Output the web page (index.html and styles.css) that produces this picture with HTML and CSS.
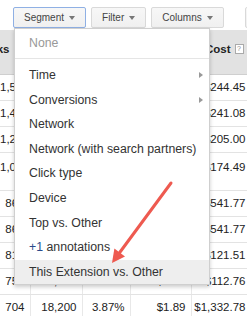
FILE: index.html
```html
<!DOCTYPE html>
<html lang="en">

<head>
    <meta charset="UTF-8">
    <meta name="viewport" content="width=device-width, initial-scale=1.0">
    <title>Segment menu</title>

    <link rel="stylesheet" href="styles.css">
</head>

<body>
    <div class="page">
        <div class="toolbar">
            <span class="rule"></span>
            <button class="btn open">Segment <i class="caret"></i></button>
            <button class="btn">Filter <i class="caret"></i></button>
            <button class="btn">Columns <i class="caret"></i></button>
            <span class="rule sep"></span>
            <button class="btn stub"></button>
        </div>

        <table class="stats">
            <thead>
                <tr>
                    <th class="c1"><div class="th">Clicks <span class="help">?</span></div></th>
                    <th class="c2"><div class="th">Impr. <span class="help">?</span></div></th>
                    <th class="c3"><div class="th">CTR <span class="help">?</span></div></th>
                    <th class="c4"><div class="th">Avg. CPC <span class="help">?</span></div></th>
                    <th class="c5"><div class="th">Cost <span class="help">?</span></div></th>
                </tr>
            </thead>
            <tbody>
                <tr>
                    <td>1,507</td><td>41,210</td><td>3.66%</td><td>$0.16</td><td>$244.45</td>
                </tr>
                <tr>
                    <td>1,402</td><td>38,954</td><td>3.60%</td><td>$0.17</td><td>$241.08</td>
                </tr>
                <tr>
                    <td>1,216</td><td>33,870</td><td>3.59%</td><td>$0.17</td><td>$205.00</td>
                </tr>
                <tr class="tall">
                    <td>1,043</td><td>29,112</td><td>3.58%</td><td>$0.17</td><td>$174.49</td>
                </tr>
                <tr>
                    <td>864</td><td>22,415</td><td>3.85%</td><td>$0.63</td><td>$541.77</td>
                </tr>
                <tr>
                    <td>864</td><td>22,415</td><td>3.85%</td><td>$0.63</td><td>$541.77</td>
                </tr>
                <tr>
                    <td>812</td><td>21,630</td><td>3.75%</td><td>$0.15</td><td>$121.51</td>
                </tr>
                <tr>
                    <td>759</td><td>20,044</td><td>3.79%</td><td>$0.15</td><td>$112.76</td>
                </tr>
                <tr>
                    <td>704</td><td>18,200</td><td>3.87%</td><td>$1.89</td><td>$1,332.78</td>
                </tr>
            </tbody>
        </table>

        <div class="menu">
            <div class="none">None</div>
            <ul class="items">
                <li class="sub">Time <i class="more"></i></li>
                <li class="sub">Conversions <i class="more"></i></li>
                <li>Network</li>
                <li>Network (with search partners)</li>
                <li>Click type</li>
                <li>Device</li>
                <li>Top vs. Other</li>
                <li><span class="plus">+1</span> annotations</li>
                <li class="hover">This Extension vs. Other</li>
            </ul>
        </div>

        <!-- callout arrow drawn over the menu -->
        <svg class="arrow" width="247" height="316" viewBox="0 0 247 316">
            <line x1="171" y1="183" x2="119.7" y2="252.5" stroke="#ee5a50" stroke-width="3" stroke-linecap="round" />
            <polygon points="112,263 125,256.4 114.4,248.6" fill="#ee5a50" />
        </svg>
    </div>
</body>

</html>
```

FILE: styles.css
```css
body {
    margin: 0;
    background: #fff;
    font-family: "Liberation Sans", Arial, sans-serif;
}

.page {
    position: relative;
    width: 247px;
    height: 316px;
    overflow: hidden;
}

/* toolbar */

.toolbar {
    display: flex;
    align-items: flex-end;
    height: 28px;
    padding-bottom: 2px;
}

.rule {
    align-self: flex-start;
    width: 1px;
    height: 28px;
    margin: 0 7px 0 6px;
    background: #e6e6e6;
}

.rule.sep {
    height: 23px;
    margin: 0 7px 0 9px;
    align-self: flex-end;
}

.btn {
    display: flex;
    align-items: center;
    gap: 5px;
    height: 21px;
    margin-right: 5px;
    padding: 0 10px 0 10px;
    border: 1px solid #d9d9d9;
    border-radius: 2px;
    background: linear-gradient(#f7f7f7, #f0f0f0);
    color: #444;
    font-family: inherit;
    font-size: 10px;
    flex-shrink: 0;
}

.btn.open {
    border-color: #8fb0e4;
}

.btn.stub {
    width: 30px;
}

.caret {
    width: 0;
    height: 0;
    border-top: 4px solid #777;
    border-left: 3px solid transparent;
    border-right: 3px solid transparent;
}

/* stats table behind the menu */

.stats {
    border-collapse: collapse;
    table-layout: fixed;
    width: 251px;
    font-size: 11.5px;
    color: #222;
}

.stats th,
.stats td {
    box-sizing: border-box;
    padding: 0 5px 0 0;
    text-align: right;
    white-space: nowrap;
    overflow: hidden;
    border-right: 1px solid #e8e8e8;
    border-bottom: 1px solid #e3e3e3;
}

.stats thead tr {
    height: 44px;
}

.stats th {
    padding: 0 7px 5px 0;
    background: #e2e2e2;
    font-weight: bold;
    border-bottom-color: #cfcfcf;
}

.th {
    display: flex;
    justify-content: flex-end;
    align-items: center;
}

.c1 { width: 30px; }
.c2 { width: 52px; }
.c3 { width: 48px; }
.c4 { width: 61px; }
.c5 { width: 60px; }

.stats tbody tr {
    height: 26px;
}

.stats tbody tr.tall {
    height: 38px;
}

.stats .tall td {
    padding-top: 8px;
    vertical-align: top;
}

.help {
    flex-shrink: 0;
    width: 7px;
    height: 8px;
    margin-left: 4px;
    border: 1px solid #aaa;
    background: #fff;
    color: #888;
    font-size: 7px;
    font-weight: normal;
    line-height: 8px;
    text-align: center;
}

/* segment dropdown */

.menu {
    position: absolute;
    left: 14px;
    top: 28px;
    width: 194px;
    height: 255px;
    border: 1px solid #cfcfcf;
    background: #fff;
    box-shadow: 0 2px 4px rgba(0, 0, 0, 0.2);
    font-size: 12.3px;
    color: #333;
}

.none {
    height: 29px;
    line-height: 29px;
    padding-left: 14px;
    color: #999;
    border-bottom: 1px solid #e5e5e5;
    margin-bottom: 4px;
}

.items {
    list-style: none;
    margin: 0;
    padding: 0;
}

.items li {
    height: 24.6px;
    line-height: 24.6px;
    padding: 0 6px 0 14px;
}

.items li.sub {
    display: flex;
    justify-content: space-between;
    align-items: center;
}

.items li.hover {
    background: #eeeeee;
}

.more {
    width: 0;
    height: 0;
    border-left: 4px solid #999;
    border-top: 3px solid transparent;
    border-bottom: 3px solid transparent;
}

.plus {
    color: #2b4a8a;
}

.arrow {
    position: absolute;
    left: 0;
    top: 0;
    pointer-events: none;
}
```
